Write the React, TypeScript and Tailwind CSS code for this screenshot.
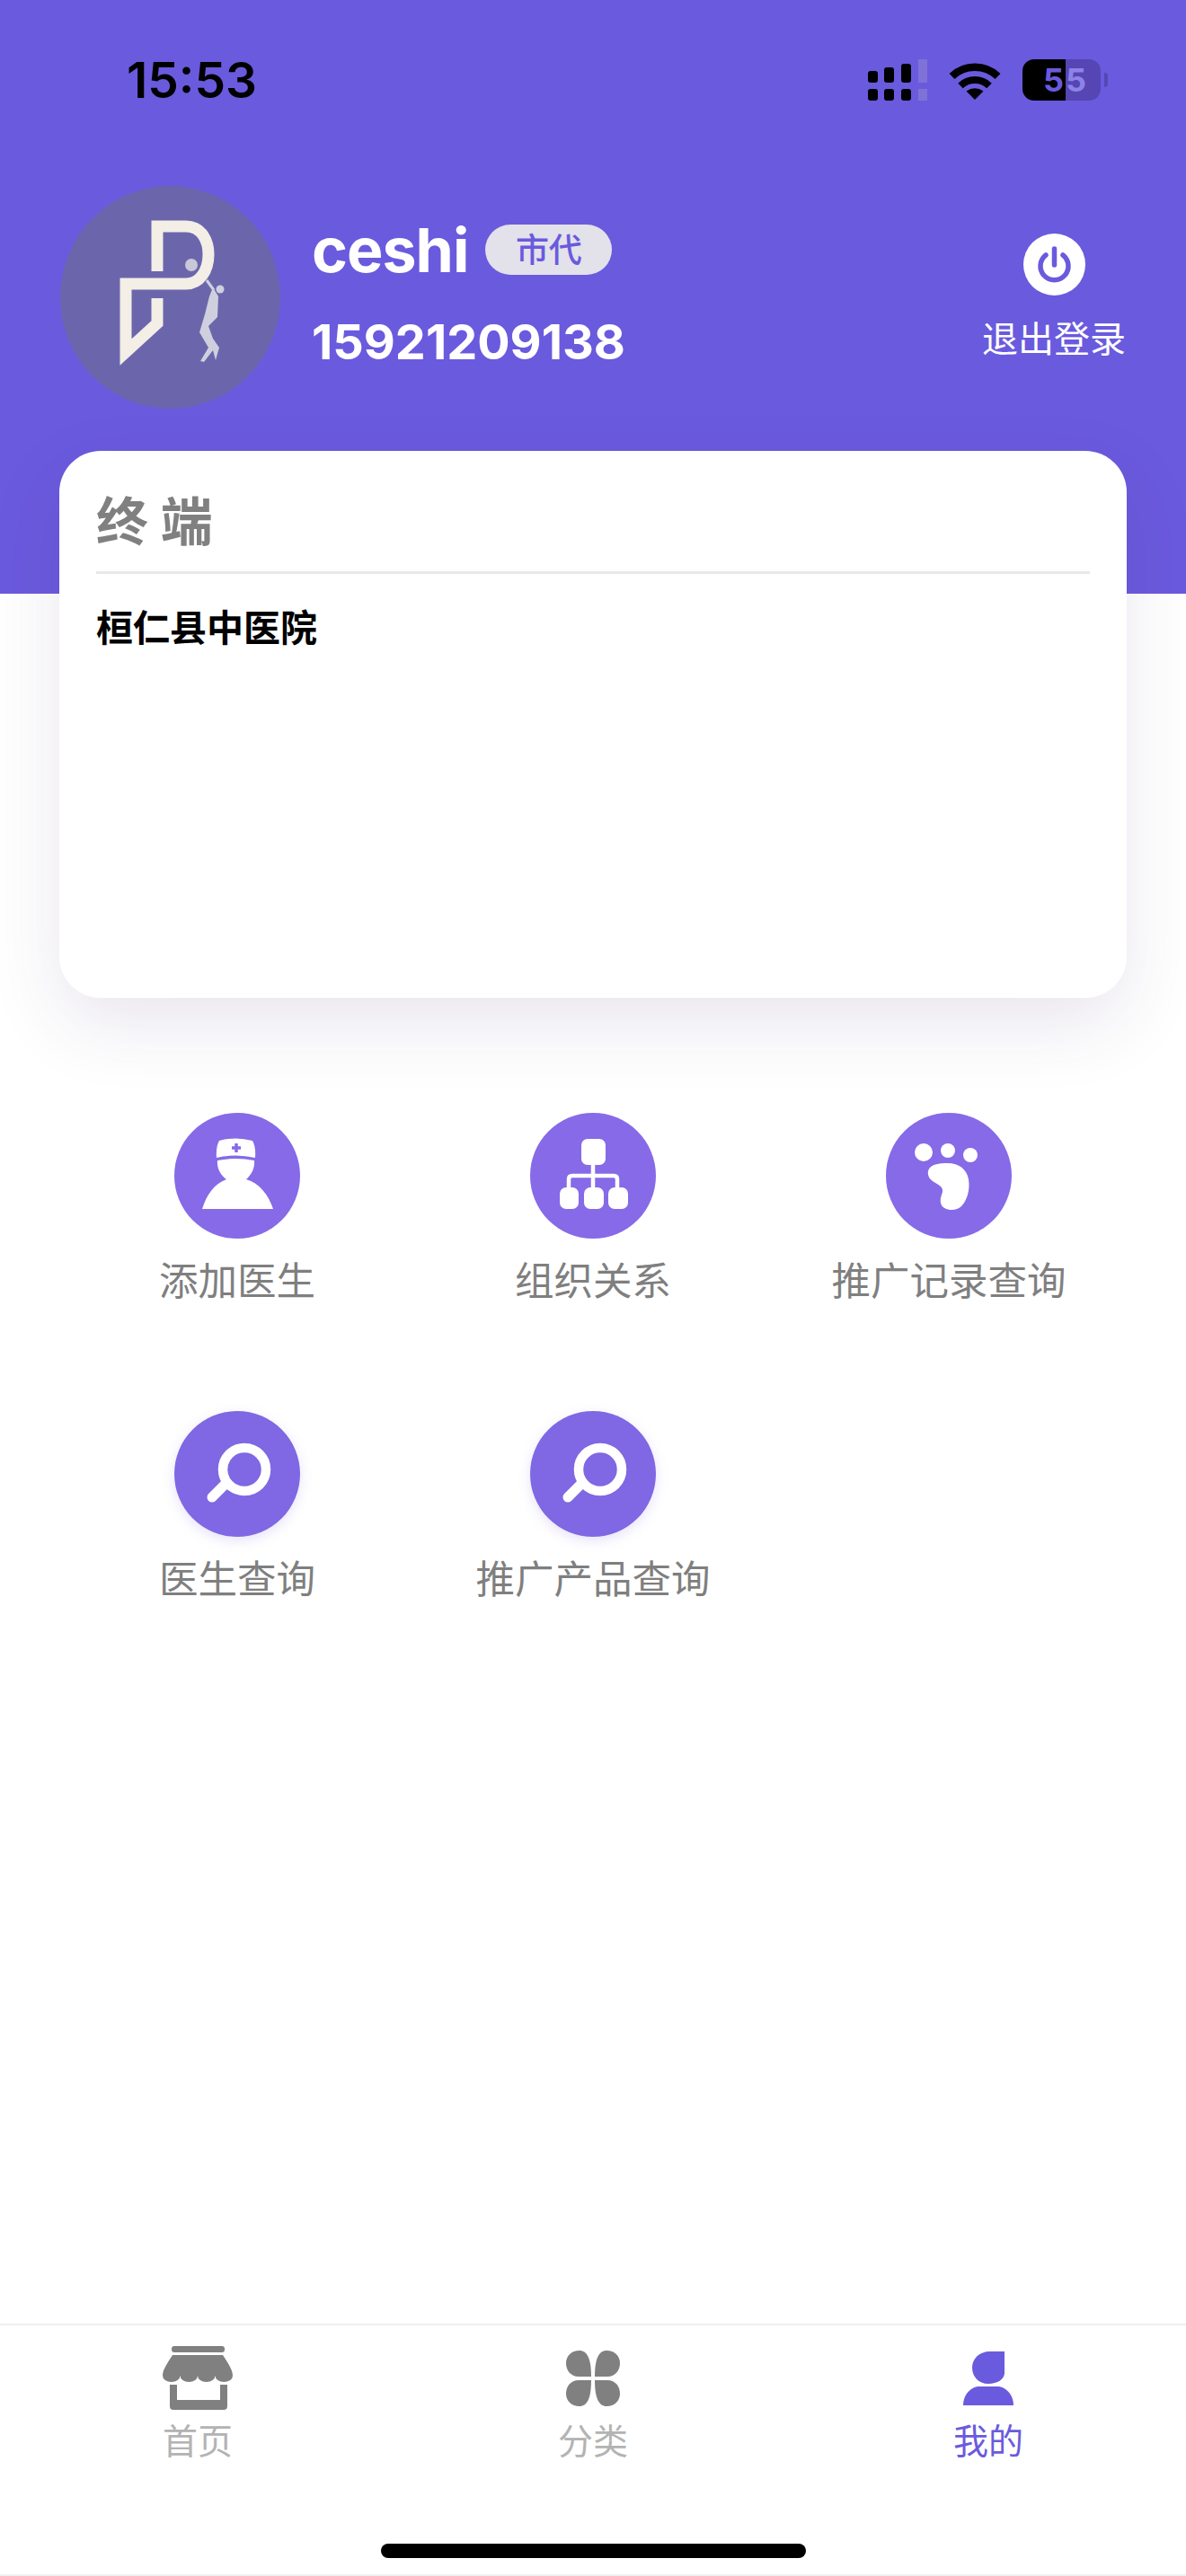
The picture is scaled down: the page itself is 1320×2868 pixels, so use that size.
const CJK = "font-['Inter','Noto_Sans_CJK_SC',sans-serif]";

function Signal() {
  return (
    <svg width="66" height="46" viewBox="0 0 66 46" fill="#000">
      <rect x="0" y="13" width="11" height="13" rx="3" />
      <rect x="18" y="9" width="11" height="17" rx="3" />
      <rect x="37" y="5" width="11" height="21" rx="3" />
      <rect x="56" y="0" width="10" height="26" fill="#7f72d6" />
      <rect x="0" y="33" width="11" height="13" rx="3" />
      <rect x="18" y="33" width="11" height="13" rx="3" />
      <rect x="37" y="33" width="11" height="13" rx="3" />
      <rect x="56" y="33" width="10" height="13" fill="#7f72d6" />
    </svg>
  );
}

function Wifi() {
  return (
    <svg width="58" height="43" viewBox="0 0 58 43" fill="none" stroke="#000">
      <path d="M3.5 17 A37 37 0 0 1 54.5 17" strokeWidth="8.5" />
      <path d="M13 27.5 A23 23 0 0 1 45 27.5" strokeWidth="8" />
      <path d="M29 43 L19.5 33.5 Q29 27 38.5 33.5 Z" fill="#000" stroke="none" />
    </svg>
  );
}

function Battery() {
  return (
    <div className="flex items-center">
      <div className="flex h-[46px] w-[87px] overflow-hidden rounded-[13px] text-[36px] leading-[46px] font-bold">
        <div className="w-[48px] bg-black pr-[2px] text-right text-[#6a5ade]">5</div>
        <div className="flex-1 bg-[#5546b4] text-left text-[#8d82e8]">5</div>
      </div>
      <div className="ml-[4px] h-[16px] w-[4px] rounded-r-full bg-[#5546b4]" />
    </div>
  );
}

function Avatar() {
  return (
    <svg width="245" height="248" viewBox="0 0 245 248" className="shrink-0">
      <ellipse cx="122.5" cy="124" rx="122.5" ry="124" fill="#6b66ac" />
      <path
        d="M108 95 V45 H140 C158 45 165 62 165 76 C165 95 155 109 140 109 H73 V185 L108 153 V125"
        fill="none"
        stroke="#f3eee6"
        strokeWidth="13"
      />
      <circle cx="146" cy="88" r="7" fill="#c9c8d8" />
      <path d="M163 105 L171 116" stroke="#cfd0de" strokeWidth="3" />
      <circle cx="178" cy="115" r="4.5" fill="#cfd0de" />
      <path
        d="M170 113 L176 123 L175 146 L165 156 L170 170 L177 180 L173 194 L170 183 L160 196 L156 195 L165 180 L155 163 L161 143 L166 123 Z"
        fill="#cfd0de"
      />
    </svg>
  );
}

function PowerIcon() {
  return (
    <svg width="69" height="69" viewBox="0 0 69 69">
      <circle cx="34.5" cy="34.5" r="34.5" fill="#fff" />
      <path
        d="M25 24 A15.5 15.5 0 1 0 44 24 M34.5 17 V35"
        fill="none"
        stroke="#6a5ade"
        strokeWidth="5.5"
        strokeLinecap="round"
      />
    </svg>
  );
}

function NurseGlyph() {
  return (
    <>
      <path d="M50 31 Q68 26 87 31 Q91 38 90 50 Q68 45 47 50 Q46 38 50 31Z" fill="#fff" />
      <path d="M69 34 V44 M64 39 H74" stroke="#866ae8" strokeWidth="3.5" />
      <path
        d="M48 53 Q68 49 89 53 C90 62 85 70 80 74 C95 78 105 92 110 107 H31 C36 92 43 80 58 74 C52 70 47 62 48 53Z"
        fill="#fff"
      />
    </>
  );
}

function OrgGlyph() {
  return (
    <>
      <path d="M70 55 V85 M43 85 V74 Q43 70 47 70 H93 Q97 70 97 74 V85" fill="none" stroke="#fff" strokeWidth="4.5" />
      <rect x="57" y="29" width="27" height="29" rx="7" fill="#fff" />
      <rect x="33" y="83" width="21" height="24" rx="7" fill="#fff" />
      <rect x="60" y="83" width="22" height="24" rx="7" fill="#fff" />
      <rect x="87" y="83" width="22" height="24" rx="7" fill="#fff" />
    </>
  );
}

function FootGlyph() {
  return (
    <g fill="#fff">
      <circle cx="42" cy="44" r="10" />
      <circle cx="69" cy="42" r="8" />
      <circle cx="94" cy="47" r="8" />
      <path d="M66 56 C80 55 90 62 92 74 C94 86 90 98 84 104 C78 110 66 109 62 103 C59 97 62 92 63 88 C64 82 58 80 52 76 C46 72 45 64 50 60 C54 57 60 56 66 56Z" />
    </g>
  );
}

function SearchGlyph() {
  return (
    <g fill="none" stroke="#fff">
      <circle cx="78" cy="65" r="24" strokeWidth="10.5" />
      <path d="M56 82 L42 96" strokeWidth="11" strokeLinecap="round" />
    </g>
  );
}

function MenuItem({ label, glyph, soft }: { label: string; glyph: React.ReactNode; soft?: boolean }) {
  return (
    <div className="flex flex-col items-center">
      <div className={soft ? "h-[140px] w-[140px] rounded-full shadow-[0_4px_14px_rgba(120,95,220,0.18)]" : "h-[140px] w-[140px]"}>
        <svg width="140" height="140" viewBox="0 0 140 140">
          <circle cx="70" cy="70" r="70" fill={soft ? "#8067e3" : "#866ae8"} />
          {glyph}
        </svg>
      </div>
      <div className="mt-[22px] text-[43.5px] leading-[50px] whitespace-nowrap text-[#7f7f7f]">{label}</div>
    </div>
  );
}

function StoreIcon() {
  return (
    <svg width="78" height="71" viewBox="0 0 78 71" fill="#808080">
      <rect x="10" y="0" width="59" height="7" rx="3" />
      <path d="M11 10 H67 C72 18 78 26 78 33 A9.75 7 0 0 1 58.5 33 A9.75 7 0 0 1 39 33 A9.75 7 0 0 1 19.5 33 A9.75 7 0 0 1 0 33 C0 26 6 18 11 10Z" />
      <path d="M8 43 H16 V60 H64 V43 H72 V67 Q72 71 68 71 H12 Q8 71 8 67Z" />
    </svg>
  );
}

function CategoryIcon() {
  const petal = "M15 0 C23 0 28 8 28 29 L14 29 C5 29 0 22 0 14 C0 6 6 0 15 0Z";
  return (
    <svg width="60" height="62" viewBox="0 0 60 62" fill="#808080">
      <path d={petal} />
      <path d={petal} transform="translate(60 0) scale(-1 1)" />
      <path d={petal} transform="translate(0 62) scale(1 -1)" />
      <path d={petal} transform="translate(60 62) scale(-1 -1)" />
    </svg>
  );
}

function PersonIcon() {
  return (
    <svg width="56" height="60" viewBox="0 0 56 60" fill="#6a5ade">
      <path d="M46 0 V24 C46 31 38 36 28 36 C17 36 10 28 10 18 C10 8 18 0 30 0Z" />
      <path d="M16 39 H40 C50 41 56 50 56 60 H0 C0 50 6 41 16 39Z" />
    </svg>
  );
}

function TabItem({ label, icon, active }: { label: string; icon: React.ReactNode; active?: boolean }) {
  return (
    <div className="flex flex-col items-center">
      <div className="flex h-[71px] items-center justify-center">{icon}</div>
      <div className={active ? "mt-[12px] text-[39px] leading-[46px] text-[#6a5ade]" : "mt-[12px] text-[39px] leading-[46px] text-[#b3b3b3]"}>
        {label}
      </div>
    </div>
  );
}

export default function App() {
  return (
    <div className={`${CJK} relative flex h-[2868px] w-[1320px] flex-col overflow-hidden bg-white`}>
      {/* Header */}
      <div className="h-[661px] shrink-0 bg-[#6a5ade]">
        <div className="flex h-[178px] items-center justify-between pr-[87px] pl-[141px]">
          <span className="text-[55px] leading-none font-semibold text-black">15:53</span>
          <div className="flex items-center gap-[24px]">
            <Signal />
            <Wifi />
            <Battery />
          </div>
        </div>
        <div className="mt-[29px] flex items-start justify-between pr-[67px] pl-[67px]">
          <div className="flex items-start">
            <Avatar />
            <div className="ml-[35px]">
              <div className="mt-[31px] flex items-center">
                <span className="text-[68px] leading-[80px] font-bold tracking-[-1px] text-white">ceshi</span>
                <span className="ml-[19px] flex h-[56px] w-[141px] items-center justify-center rounded-full bg-[#e3e1ea] text-[37px] leading-none font-medium text-[#6a5ade]">
                  市代
                </span>
              </div>
              <div className="mt-[30px] text-[54px] leading-[66px] font-bold text-white">15921209138</div>
            </div>
          </div>
          <div className="mt-[53px] flex flex-col items-center">
            <PowerIcon />
            <div className="mt-[24px] text-[40px] leading-[50px] text-white">退出登录</div>
          </div>
        </div>
      </div>

      {/* Terminal card */}
      <div className="relative mx-[66px] -mt-[159px] h-[609px] shrink-0 rounded-[46px] bg-white px-[41px] shadow-[0_30px_80px_rgba(70,50,110,0.12)]">
        <div className="border-b-[3px] border-[#e8e8e8] pt-[38px] pb-[14px] text-[58px] leading-[82px] font-bold text-[#808080]">
          终 端
        </div>
        <div className="mt-[35px] text-[41px] leading-[50px] font-bold text-black">桓仁县中医院</div>
      </div>

      {/* Menu */}
      <div className="mx-[66px] mt-[128px] grid grid-cols-3 gap-y-[120px]">
        <MenuItem label="添加医生" glyph={<NurseGlyph />} />
        <MenuItem label="组织关系" glyph={<OrgGlyph />} />
        <MenuItem label="推广记录查询" glyph={<FootGlyph />} />
        <MenuItem label="医生查询" glyph={<SearchGlyph />} soft />
        <MenuItem label="推广产品查询" glyph={<SearchGlyph />} soft />
      </div>

      <div className="flex-1" />

      {/* Tab bar */}
      <div className="h-[281px] shrink-0 border-t-2 border-b-2 border-[#f0f0f0] pt-[23px]">
        <div className="grid grid-cols-3">
          <TabItem label="首页" icon={<StoreIcon />} />
          <TabItem label="分类" icon={<CategoryIcon />} />
          <TabItem label="我的" icon={<PersonIcon />} active />
        </div>
        <div className="mx-auto mt-[91px] h-[16px] w-[473px] rounded-full bg-black" />
      </div>
    </div>
  );
}
